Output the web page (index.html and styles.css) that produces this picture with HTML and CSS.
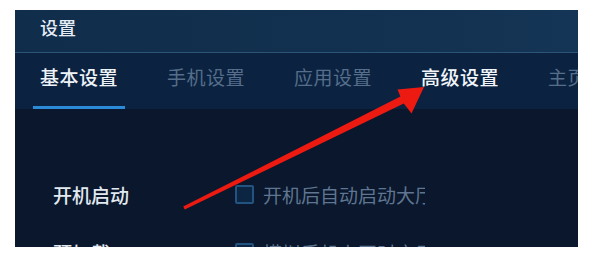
FILE: index.html
```html
<!DOCTYPE html>
<html lang="zh-CN">
<head>
<meta charset="utf-8">
<title>设置</title>
<link rel="stylesheet" href="styles.css">
</head>
<body>
<div class="panel">
  <div class="titlebar">设置</div>
  <div class="tabs">
    <div class="tab active">基本设置</div>
    <div class="tab">手机设置</div>
    <div class="tab">应用设置</div>
    <div class="tab hot">高级设置</div>
    <div class="tab">主页设置</div>
  </div>
  <div class="content">
    <div class="row">
      <div class="label">开机启动</div>
      <div class="option"><span class="check"></span><span class="opt-text">开机后自动启动大厅</span></div>
    </div>
    <div class="row">
      <div class="label">预加载</div>
      <div class="option"><span class="check"></span><span class="opt-text">模拟手机上网时启用</span></div>
    </div>
  </div>
</div>
<svg class="arrow" width="593" height="257" viewBox="0 0 593 257">
  <polygon fill="#ec1a10" points="183.2,206.6 400.4,96.6 397.5,89.5 424,87 411.5,113.5 403.8,103.4 184.8,209.6"/>
</svg>
</body>
</html>
```
FILE: styles.css
```css
html, body {
  margin: 0;
  padding: 0;
  background: #ffffff;
}
body {
  position: relative;
  width: 593px;
  height: 257px;
  overflow: hidden;
  font-family: "Noto Sans CJK SC", "Noto Sans", sans-serif;
}
.panel {
  margin: 10px 0 0 15px;
  width: 563px;
  height: 237px;
  display: flex;
  flex-direction: column;
  overflow: hidden;
  background: #0a172c;
}
.titlebar {
  height: 43px;
  flex: none;
  box-sizing: border-box;
  padding: 0 0 8px 25px;
  display: flex;
  align-items: center;
  font-size: 18px;
  font-weight: 500;
  color: #e6edf5;
  background: linear-gradient(90deg, #112d4c 0%, #12304f 60%, #153556 100%);
  border-bottom: 1px solid #2b5476;
}
.tabs {
  height: 56px;
  flex: none;
  box-sizing: border-box;
  padding-left: 18px;
  display: flex;
  gap: 35px;
  background: #0b2341;
  white-space: nowrap;
}
.tab {
  flex: none;
  width: 92px;
  box-sizing: border-box;
  padding: 0 7px 6px;
  display: flex;
  align-items: center;
  font-size: 19px;
  letter-spacing: 0.5px;
  color: #566e8a;
  border-bottom: 3px solid transparent;
}
.tab.active {
  color: #eef3f8;
  font-weight: 500;
  border-bottom-color: #2b8bd8;
}
.tab.hot {
  color: #f2f6fa;
  font-weight: 500;
}
.content {
  flex: 1;
  padding: 75px 0 0 38px;
  display: flex;
  flex-direction: column;
  gap: 38px;
}
.row {
  display: flex;
  align-items: center;
  height: 20px;
}
.label {
  width: 182px;
  flex: none;
  font-size: 19px;
  font-weight: 500;
  color: #e2e9f1;
}
.option {
  display: flex;
  align-items: center;
  gap: 9px;
  width: 190px;
  overflow: hidden;
  white-space: nowrap;
}
.check {
  flex: none;
  width: 15px;
  height: 15px;
  border: 2px solid #235380;
  border-radius: 2px;
  background: #0c2542;
}
.opt-text {
  font-size: 19px;
  color: #5f7591;
  width: 162px;
  overflow: hidden;
}
.arrow {
  position: absolute;
  left: 0;
  top: 0;
}
```
